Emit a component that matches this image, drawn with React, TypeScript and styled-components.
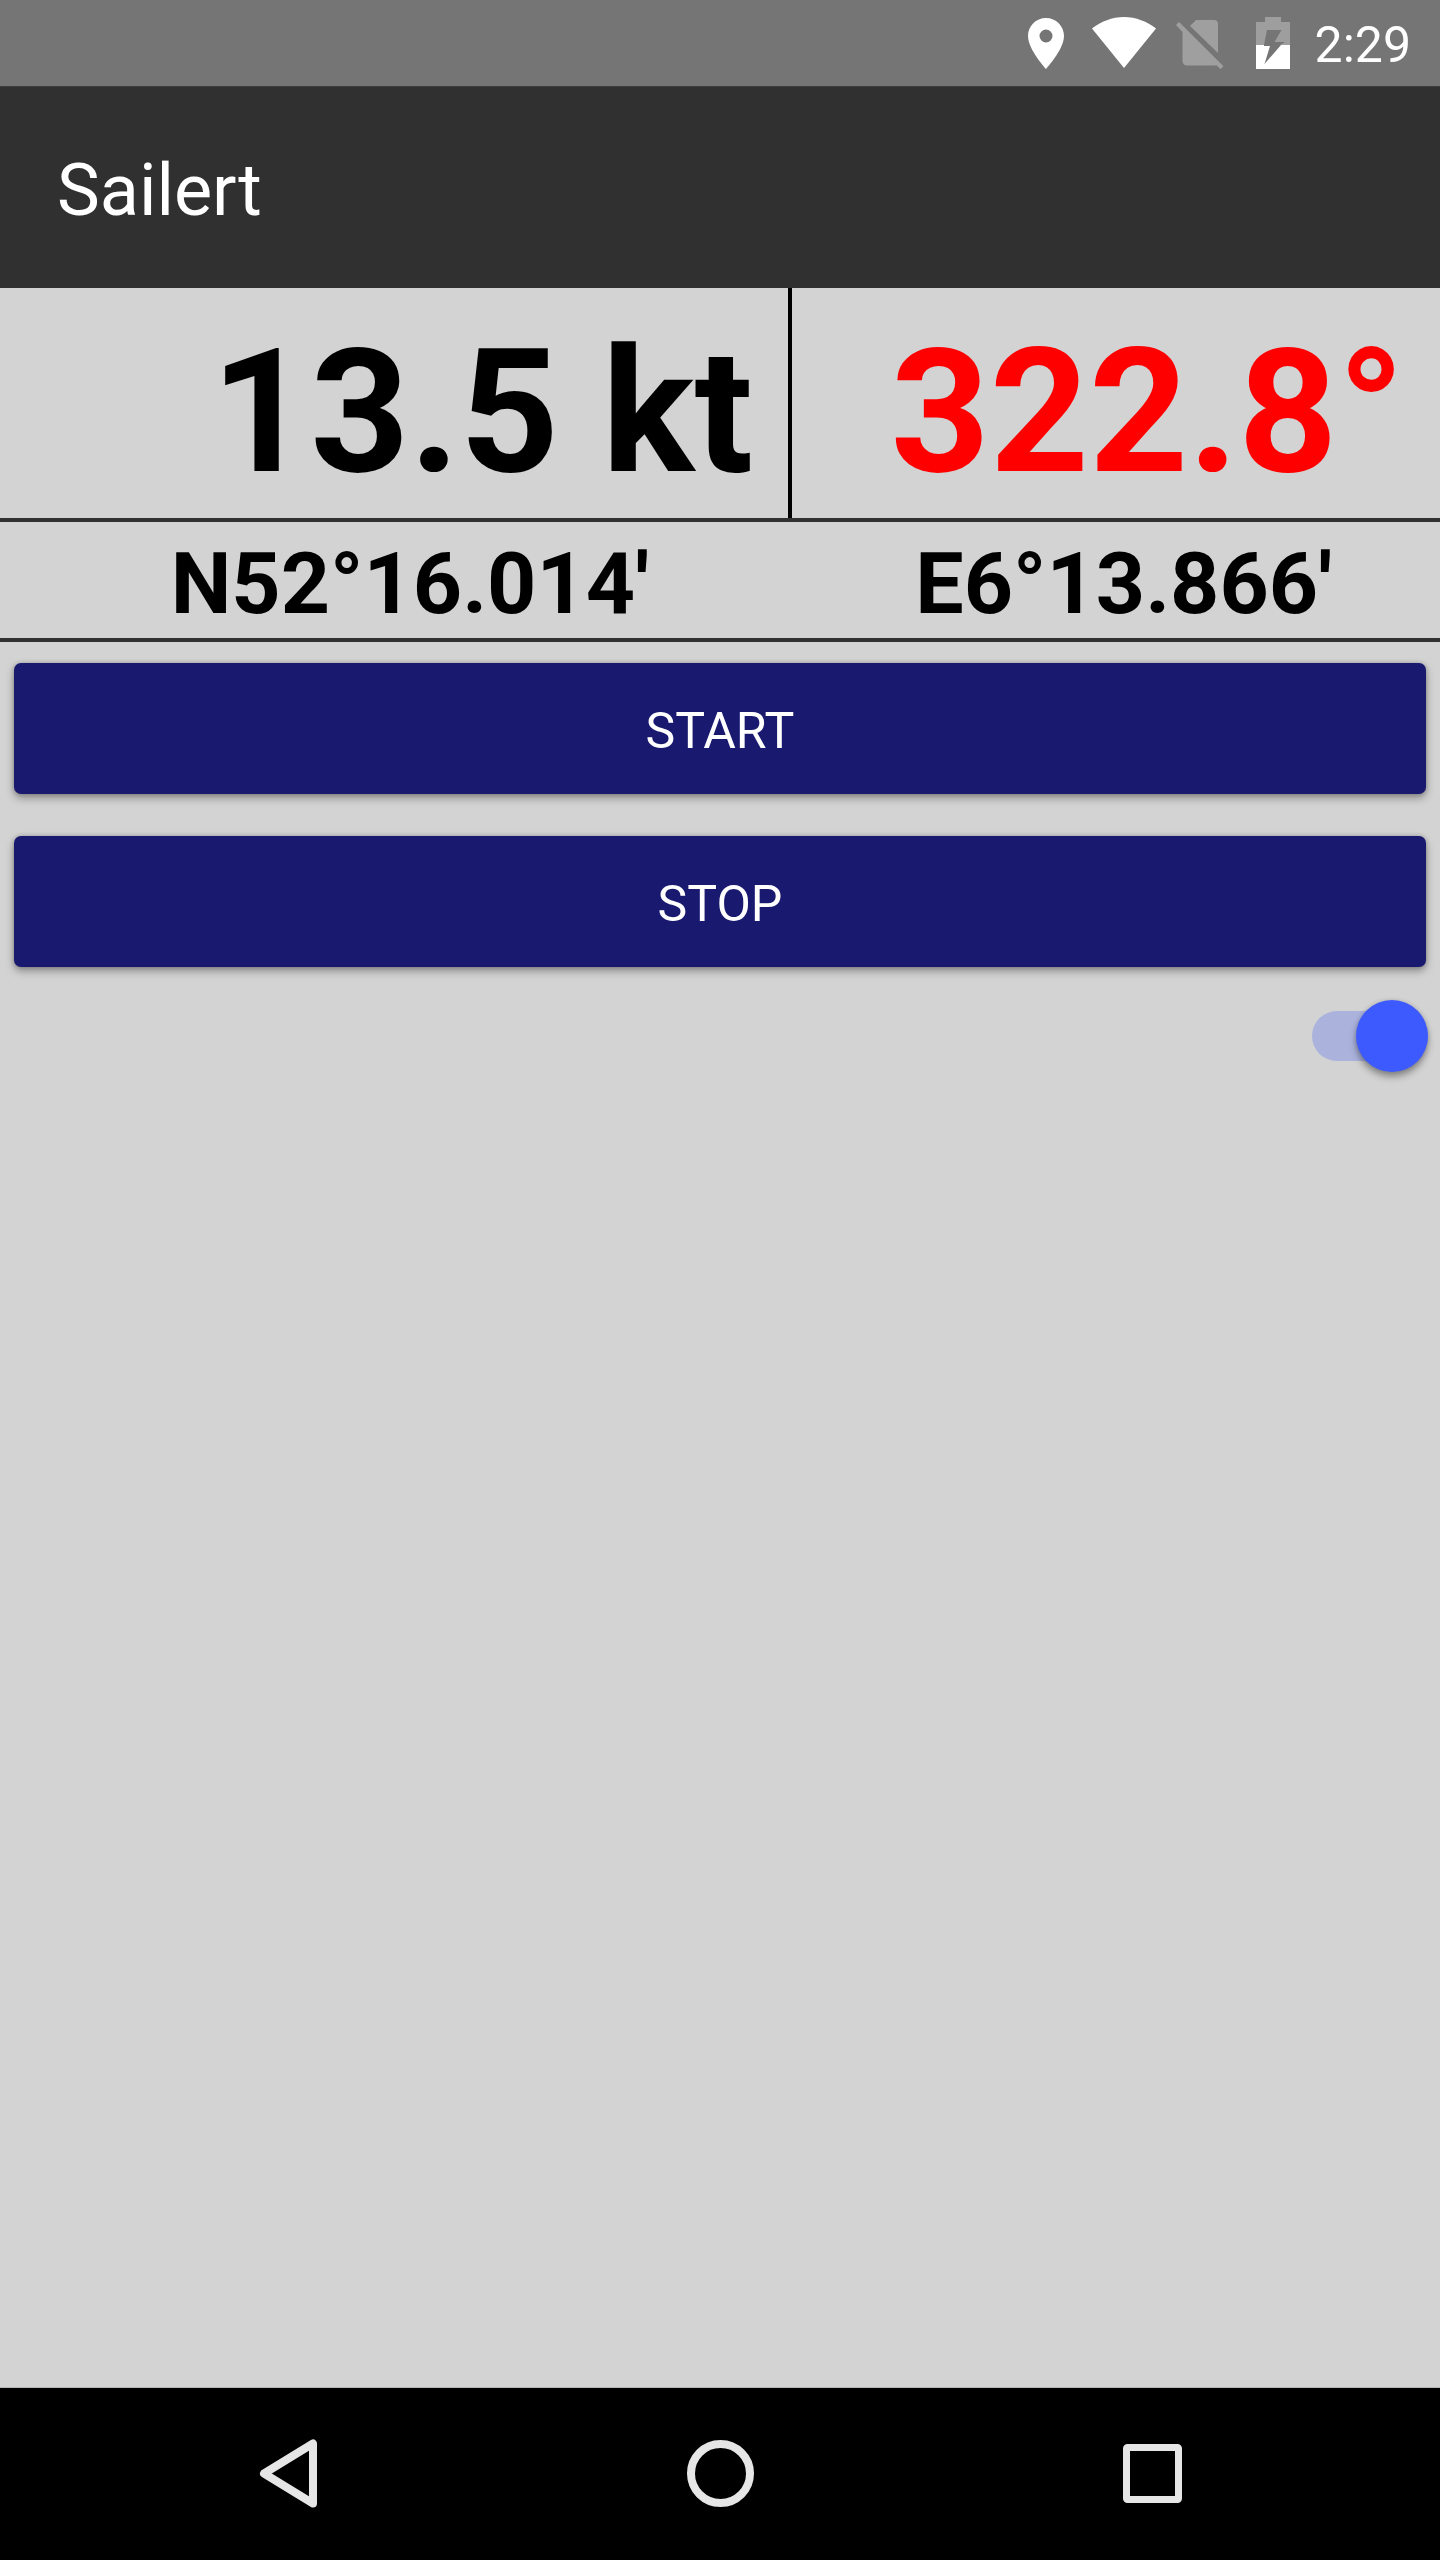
import React, { useState } from "react";
import styled, { createGlobalStyle } from "styled-components";

const GlobalStyle = createGlobalStyle`
  *, *::before, *::after { box-sizing: border-box; }
  body {
    margin: 0;
    background: #d3d3d3;
    font-family: Roboto, "Noto Sans", sans-serif;
  }
`;

const Screen = styled.div`
  display: flex;
  flex-direction: column;
  min-height: 100vh;
`;

const StatusBar = styled.div`
  display: flex;
  align-items: center;
  justify-content: flex-end;
  height: 86px;
  padding-right: 29px;
  background: #757575;
  color: #fff;
`;

const StatusIcon = styled.svg<{ $gap: number }>`
  display: block;
  height: 52px;
  margin-right: ${(p) => p.$gap}px;
  fill: currentColor;
`;

const Clock = styled.time`
  padding-top: 4px;
  font-size: 50px;
  line-height: 58px;
`;

const AppBar = styled.header`
  display: flex;
  align-items: center;
  height: 202px;
  padding: 6px 57px 0;
  background: #303030;
  border-top: 1px solid #3c3c3c;
  color: #fff;
`;

const Title = styled.h1`
  margin: 0;
  font-size: 72px;
  line-height: 84px;
  font-weight: 400;
`;

const Main = styled.main`
  flex: 1;
`;

const Readings = styled.section`
  display: grid;
  grid-template-columns: 11fr 9fr;
  border-bottom: 4px solid #303030;
  font-weight: 700;
  text-align: right;
`;

const Reading = styled.div<{ $tone?: string; $divided?: boolean }>`
  padding: 22px 35px 4px 0;
  border-right: ${(p) => (p.$divided ? "4px solid #000" : "0")};
  color: ${(p) => p.$tone ?? "#000"};
  font-size: 173px;
  line-height: 204px;
`;

const Position = styled.div<{ $inset: number }>`
  padding: 12px ${(p) => p.$inset}px 4px 0;
  font-size: 86px;
  line-height: 100px;
`;

const Actions = styled.div`
  display: grid;
  gap: 42px;
  padding: 21px 14px 33px;
`;

const ActionButton = styled.button`
  height: 131px;
  padding: 4px 0 0;
  border: 0;
  border-radius: 7px;
  background: #191970;
  box-shadow: 0 4px 8px rgba(0, 0, 0, 0.35), 0 0 4px rgba(0, 0, 0, 0.2);
  color: #fff;
  font: 400 50px/58px Roboto, "Noto Sans", sans-serif;
  text-transform: uppercase;
`;

const SwitchRow = styled.div`
  display: flex;
  justify-content: flex-end;
  padding: 11px 12px;
`;

const Switch = styled.input`
  appearance: none;
  display: flex;
  align-items: center;
  justify-content: flex-start;
  width: 116px;
  height: 50px;
  margin: 0;
  border-radius: 25px;
  background: #b0b0b0;

  &::before {
    content: "";
    flex: none;
    width: 72px;
    height: 72px;
    border-radius: 50%;
    background: #f1f1f1;
    box-shadow: 0 5px 7px rgba(0, 0, 0, 0.35), 0 0 4px rgba(0, 0, 0, 0.15);
  }

  &:checked {
    justify-content: flex-end;
    background: #abb3dd;
  }

  &:checked::before {
    background: #3d5afe;
  }
`;

const NavBar = styled.nav`
  display: grid;
  grid-template-columns: repeat(3, 1fr);
  height: 173px;
  padding: 0 72px;
  border-top: 1px solid #b4b4b4;
  background: #000;
`;

const NavButton = styled.button`
  display: grid;
  place-items: center;
  padding: 0;
  border: 0;
  background: #000;
`;

const NavIcon = styled.svg`
  display: block;
  width: 80px;
  height: 80px;
  fill: none;
  stroke: #e6e6e6;
  stroke-width: 8;
  stroke-linejoin: round;
`;

export default function App() {
  const [tracking, setTracking] = useState(true);

  return (
    <Screen>
      <GlobalStyle />
      <StatusBar>
        <StatusIcon $gap={28} viewBox="0 0 36 52" width="36" aria-hidden="true">
          <path
            fillRule="evenodd"
            d="M18 1C8 1 0 9 0 19c0 13.500 18 33 18 33s18-19.500 18-33C36 9 28 1 18 1zm0 24.500a6.500 6.500 0 1 1 0-13 6.500 6.500 0 0 1 0 13z"
          />
        </StatusIcon>
        <StatusIcon $gap={20} viewBox="0 0 64 52" width="64" aria-hidden="true">
          <path d="M32 51 64 11.500C55 4.500 44 0 32 0S9 4.500 0 11.500z" />
        </StatusIcon>
        <StatusIcon $gap={32} viewBox="0 0 48 52" width="48" opacity="0.3" aria-hidden="true">
          <path d="M42 36V7a4 4 0 0 0-4-4H20l-6 6zM3 5 0 8l6.500 7v29a4.500 4.500 0 0 0 4.500 4.500h28l1.500-.3 4 4 3-3z" />
        </StatusIcon>
        <StatusIcon $gap={25} viewBox="0 0 34 52" width="34" aria-hidden="true">
          <path
            opacity="0.3"
            fillRule="evenodd"
            d="M0 5h9V0h16v5h9v23H0zM11 13 8 28h16l5-3H18.500l7-12z"
          />
          <path
            fillRule="evenodd"
            d="M0 28h34v24H0zM8 28v1h6L8.500 47 25 28z"
          />
        </StatusIcon>
        <Clock>2:29</Clock>
      </StatusBar>
      <AppBar>
        <Title>Sailert</Title>
      </AppBar>
      <Main>
        <Readings aria-label="Speed and course">
          <Reading $divided>13.5 kt</Reading>
          <Reading $tone="#f00">322.8°</Reading>
        </Readings>
        <Readings aria-label="Position">
          <Position $inset={143}>N52°16.014'</Position>
          <Position $inset={108}>E6°13.866'</Position>
        </Readings>
        <Actions>
          <ActionButton type="button" onClick={() => setTracking(true)}>
            Start
          </ActionButton>
          <ActionButton type="button" onClick={() => setTracking(false)}>
            Stop
          </ActionButton>
        </Actions>
        <SwitchRow>
          <Switch
            type="checkbox"
            role="switch"
            aria-label="Tracking"
            checked={tracking}
            onChange={(e) => setTracking(e.target.checked)}
          />
        </SwitchRow>
      </Main>
      <NavBar aria-label="System">
        <NavButton type="button" aria-label="Back">
          <NavIcon viewBox="0 0 80 80">
            <path d="M65 9.500v60L16 39.500z" />
          </NavIcon>
        </NavButton>
        <NavButton type="button" aria-label="Home">
          <NavIcon viewBox="0 0 80 80">
            <circle cx="40.500" cy="39.500" r="29.500" />
          </NavIcon>
        </NavButton>
        <NavButton type="button" aria-label="Recent apps">
          <NavIcon viewBox="0 0 80 80">
            <rect x="14.500" y="13.500" width="52" height="52" rx="1" strokeWidth="7" />
          </NavIcon>
        </NavButton>
      </NavBar>
    </Screen>
  );
}
